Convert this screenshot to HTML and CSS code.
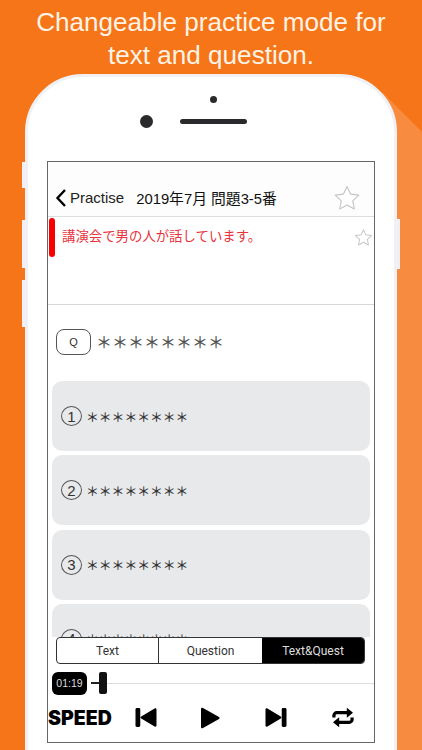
FILE: index.html
```html
<!DOCTYPE html>
<html lang="en">
<head>
<meta charset="utf-8">
<title>Practice</title>
<link rel="stylesheet" href="styles.css">
</head>
<body>
<div class="page">
  <div class="shade"></div>
  <h1 class="headline">Changeable practice mode for<br>text and question.</h1>
  <div class="phone">
    <span class="btn btn-l1"></span><span class="btn btn-l2"></span><span class="btn btn-l3"></span><span class="btn btn-r"></span>
    <div class="sensor-dot"></div>
    <div class="sensors"><span class="camera"></span><span class="speaker"></span></div>
    <div class="screen">
      <div class="nav">
        <svg class="back" viewBox="0 0 12 20"><path d="M10 2 2.5 10 10 18" fill="none" stroke="#000" stroke-width="2.4"/></svg>
        <span class="back-label">Practise</span>
        <span class="nav-title">2019年7月 問題3-5番</span>
        <svg class="star star-lg" viewBox="0 0 28 28"><path d="M14 2.5l3.5 7.6 8.3 1-6.1 5.7 1.6 8.2-7.3-4-7.3 4 1.6-8.2-6.1-5.7 8.3-1z" fill="#fff" stroke="#c4c4c4" stroke-width="1.1" stroke-linejoin="round"/></svg>
      </div>
      <div class="passage">
        <span class="marker"></span>
        <span class="passage-text">講演会で男の人が話しています。</span>
        <svg class="star star-sm" viewBox="0 0 28 28"><path d="M14 2.5l3.5 7.6 8.3 1-6.1 5.7 1.6 8.2-7.3-4-7.3 4 1.6-8.2-6.1-5.7 8.3-1z" fill="#fff" stroke="#c8c8c8" stroke-width="1.5" stroke-linejoin="round"/></svg>
      </div>
      <div class="content">
        <div class="question"><span class="q-box">Q</span><span class="q-text">＊＊＊＊＊＊＊＊</span></div>
        <div class="option"><span class="num">1</span><span class="opt-text">＊＊＊＊＊＊＊＊</span></div>
        <div class="option"><span class="num">2</span><span class="opt-text">＊＊＊＊＊＊＊＊</span></div>
        <div class="option"><span class="num">3</span><span class="opt-text">＊＊＊＊＊＊＊＊</span></div>
        <div class="option"><span class="num">4</span><span class="opt-text">＊＊＊＊＊＊＊＊</span></div>
      </div>
      <div class="panel">
        <div class="segments">
          <span class="seg">Text</span>
          <span class="seg seg-mid">Question</span>
          <span class="seg seg-on">Text&amp;Quest</span>
        </div>
        <div class="slider">
          <span class="time">01:19</span>
          <span class="dash"></span>
          <span class="thumb"></span>
          <span class="track"></span>
        </div>
        <div class="controls">
          <span class="speed">SPEED</span>
          <svg class="ctl ctl-prev" viewBox="0 0 24 22"><rect x="1" y="1" width="5" height="20" rx="1.5"/><path d="M23 2.5v17c0 1-1 1.500-2 1L7 12c-1-.6-1-1.400 0-2L21 1.500c1-.5 2 0 2 1z"/></svg>
          <svg class="ctl ctl-play" viewBox="0 0 20 22"><path d="M1 2v18c0 1.200 1 1.600 2 1l16-9c.8-.5.8-1.500 0-2L3 1C2 .4 1 .8 1 2z"/></svg>
          <svg class="ctl ctl-next" viewBox="0 0 24 22"><rect x="18" y="1" width="5" height="20" rx="1.500"/><path d="M1 2.500v17c0 1 1 1.500 2 1L17 12c1-.6 1-1.400 0-2L3 1.500c-1-.5-2 0-2 1z"/></svg>
          <svg class="ctl ctl-loop" viewBox="0 0 24 22"><path d="M2.500 11V9a3 3 0 0 1 3-3H17" fill="none" stroke="#000" stroke-width="3.400"/><path d="M16 .8 22.500 6 16 11.200z"/><path d="M21.500 11v2a3 3 0 0 1-3 3H7" fill="none" stroke="#000" stroke-width="3.400"/><path d="M8 10.800 1.500 16 8 21.200z"/></svg>
        </div>
      </div>
    </div>
  </div>
</div>
</body>
</html>
```
FILE: styles.css
```css
* { box-sizing: border-box; }
html, body { margin: 0; padding: 0; }
body { width: 422px; height: 750px; overflow: hidden; font-family: "Liberation Sans", "Noto Sans CJK JP", sans-serif; }
.page { position: relative; width: 422px; height: 750px; overflow: hidden; background: #f57518; }
.shade { position: absolute; inset: 0; background: #f78b3f; clip-path: polygon(382px 92px, 422px 132px, 422px 750px, 382px 750px); }
.headline { position: relative; margin: 0; height: 74px; padding-top: 6px; font-size: 26.100px; line-height: 33px; font-weight: 400; text-align: center; color: #fff3e6; }
.phone { position: relative; width: 372px; height: 700px; margin-left: 25px; padding-top: 19px; background: #fff; border: 3px solid #f0f0f5; border-radius: 58px 58px 0 0; }
.btn { position: absolute; width: 3px; background: #f0f0f5; }
.btn-l1 { left: -6px; top: 85px; height: 26px; }
.btn-l2 { left: -6px; top: 143px; height: 48px; }
.btn-l3 { left: -6px; top: 203px; height: 47px; }
.btn-r { right: -6px; top: 142px; height: 50px; }
.sensor-dot { width: 7px; height: 7px; margin-left: 182px; border-radius: 50%; background: #2a2a2c; }
.sensors { display: flex; align-items: center; height: 13px; margin-top: 12px; margin-left: 112px; }
.camera { width: 13px; height: 13px; border-radius: 50%; background: #2a2a2c; }
.speaker { width: 67px; height: 5px; margin-left: 27px; border-radius: 3px; background: #2a2a2c; }
.screen { display: flex; flex-direction: column; width: 328px; height: 582px; margin-top: 33px; margin-left: 19px; border: 1px solid #666; background: #fff; overflow: hidden; }
.nav { display: flex; align-items: center; flex: none; height: 55px; padding: 17px 13px 0 7px; background: #fdfdfd; border-bottom: 1px solid #ddd; font-size: 15px; color: #111; }
.back { width: 12px; height: 20px; }
.back-label { margin-left: 3px; color: #222; }
.nav-title { margin-left: 12px; font-size: 14.800px; }
.star-lg { width: 28px; height: 28px; margin-left: auto; }
.passage { display: flex; align-items: flex-start; flex: none; height: 88px; padding: 1px 1px 0 1px; border-bottom: 1px solid #d6d6d6; }
.marker { flex: none; width: 6px; height: 39px; border-radius: 3px; background: #f80000; }
.passage-text { margin-left: 7px; padding-top: 10px; font-size: 13.400px; line-height: 18px; color: #e8333c; }
.star-sm { width: 19px; height: 19px; margin-left: auto; margin-top: 10px; }
.content { flex: 1; min-height: 0; overflow: hidden; padding: 23px 4px 0; }
.question { display: flex; align-items: center; height: 27px; margin: 0 0 26px 4px; }
.q-box { display: flex; align-items: center; justify-content: center; width: 35px; height: 26px; border: 1px solid #555; border-radius: 8px; font-size: 11px; color: #333; }
.q-text { margin-left: 5px; margin-top: -2px; font-size: 16px; font-weight: 500; color: #555; font-family: "Noto Sans CJK JP", sans-serif; white-space: nowrap; }
.option { display: flex; align-items: center; height: 70px; margin-bottom: 4.300px; padding-left: 9px; border-radius: 10px; background: #e8e9eb; }
.num { display: flex; align-items: center; justify-content: center; width: 21px; height: 20px; border: 1px solid #555; border-radius: 50%; font-size: 15px; color: #333; }
.opt-text { margin-left: 4px; font-size: 12.800px; font-weight: 500; color: #333; font-family: "Noto Sans CJK JP", sans-serif; white-space: nowrap; }
.panel { flex: none; height: 105px; background: #fff; }
.segments { display: flex; width: 309px; height: 27px; margin-left: 8px; border: 1px solid #333; border-radius: 4px; overflow: hidden; font-family: Roboto, sans-serif; font-size: 12px; color: #333; }
.seg { display: flex; align-items: center; justify-content: center; width: 101px; }
.seg-mid { border-left: 1px solid #333; width: 104px; }
.seg-on { flex: 1; background: #000; color: #ddd; }
.slider { position: relative; display: flex; align-items: center; height: 24px; margin-top: 7px; padding-left: 4px; }
.time { display: flex; align-items: center; justify-content: center; width: 35px; height: 23px; border-radius: 6px; background: #000; font-size: 10.500px; color: #ddd; }
.dash { width: 8px; height: 1.500px; margin-left: 4px; background: #222; }
.thumb { position: relative; z-index: 1; width: 8px; height: 22px; border-radius: 2px; background: #111; }
.track { flex: 1; height: 1px; background: #ddd; }
.controls { position: relative; height: 44px; }
.speed { position: absolute; left: 0; top: 12px; font-family: Inter, sans-serif; font-size: 19.500px; line-height: 22px; font-weight: 900; color: #000; white-space: nowrap; }
.ctl { position: absolute; top: 12px; width: 24px; height: 21px; fill: #000; }
.ctl-prev { left: 86px; }
.ctl-play { left: 152px; width: 20px; height: 22px; }
.ctl-next { left: 216px; }
.ctl-loop { left: 283px; }
```
